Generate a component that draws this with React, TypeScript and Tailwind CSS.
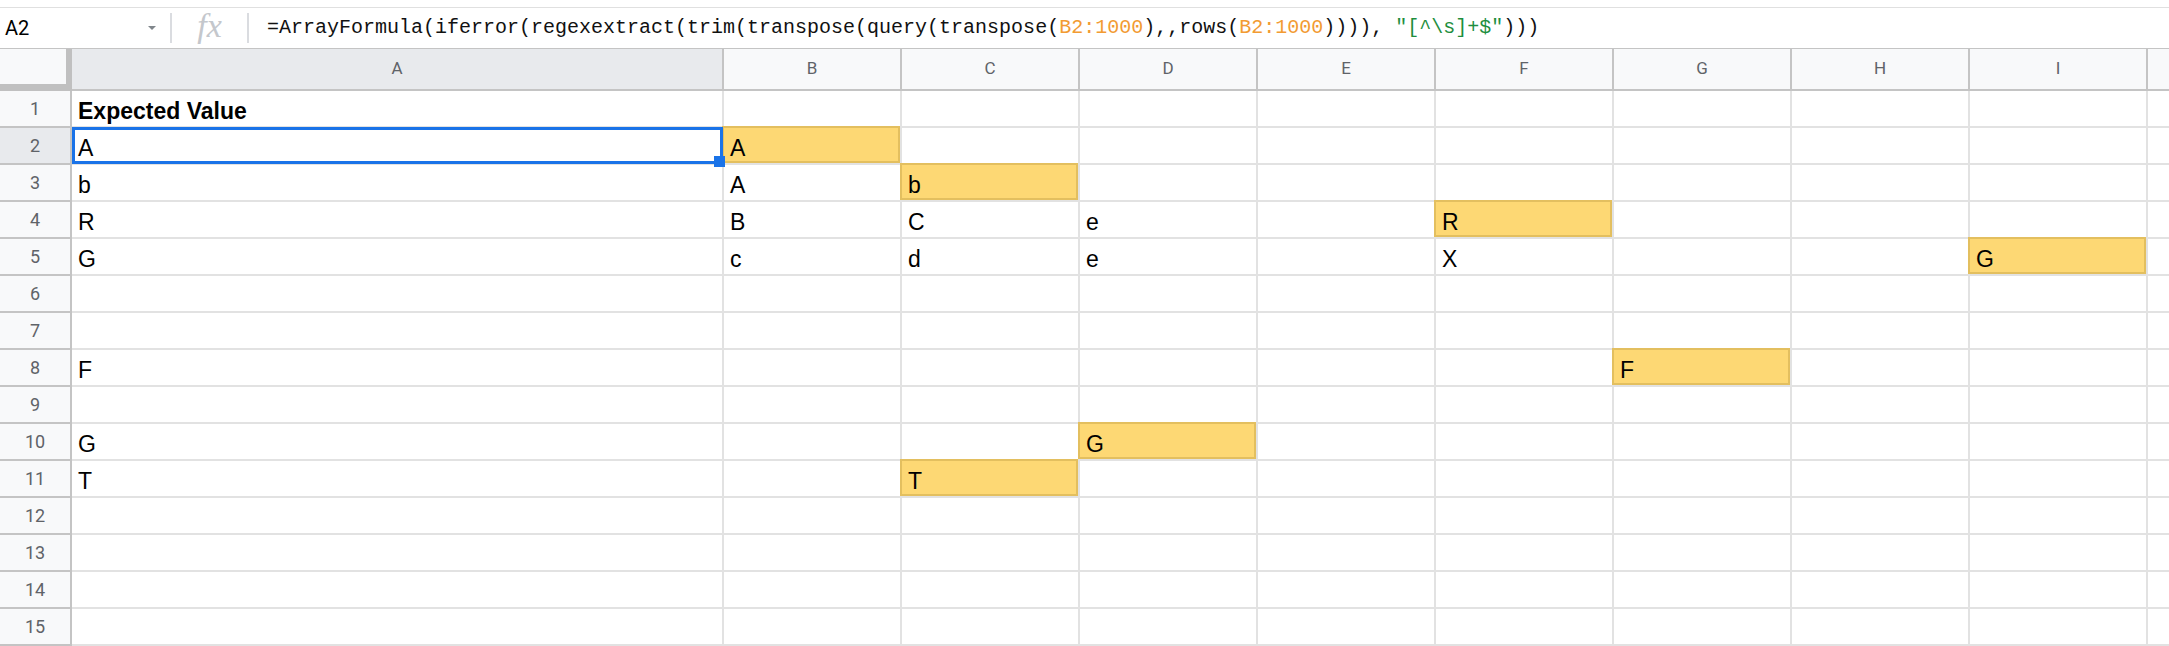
import React from "react";

type Cell = { v: string; hl?: boolean; bold?: boolean };

const COLS = ["A", "B", "C", "D", "E", "F", "G", "H", "I"];

// sheet contents, keyed by row then column
const DATA: Record<number, Record<string, Cell>> = {
  1: { A: { v: "Expected Value", bold: true } },
  2: { A: { v: "A" }, B: { v: "A", hl: true } },
  3: { A: { v: "b" }, B: { v: "A" }, C: { v: "b", hl: true } },
  4: { A: { v: "R" }, B: { v: "B" }, C: { v: "C" }, D: { v: "e" }, F: { v: "R", hl: true } },
  5: { A: { v: "G" }, B: { v: "c" }, C: { v: "d" }, D: { v: "e" }, F: { v: "X" }, I: { v: "G", hl: true } },
  8: { A: { v: "F" }, G: { v: "F", hl: true } },
  10: { A: { v: "G" }, D: { v: "G", hl: true } },
  11: { A: { v: "T" }, C: { v: "T", hl: true } },
};

const ROWS = Array.from({ length: 15 }, (_, i) => i + 1);

function FormulaBar() {
  return (
    <div className="flex items-center h-[41px] mt-[7px] border-t border-[#e0e0e0] bg-white">
      <div className="w-[170px] shrink-0 flex items-center justify-between pl-[5px] pr-[14px]">
        <span className="text-[20px] leading-none text-[#000]" style={{ fontFamily: "Roboto, sans-serif" }}>
          A2
        </span>
        <span className="w-0 h-0 border-l-[4px] border-r-[4px] border-t-[4px] border-l-transparent border-r-transparent border-t-[#80868b]" />
      </div>
      <div className="w-[2px] h-[30px] bg-[#dadce0]" />
      <div
        className="w-[75px] shrink-0 flex items-center justify-center text-[34px] leading-none italic text-[#c4c7cc] -mt-[4px]"
        style={{ fontFamily: "'Liberation Serif', serif" }}
      >
        fx
      </div>
      <div className="w-[2px] h-[30px] bg-[#dadce0]" />
      <div
        className="pl-[18px] text-[20px] leading-none text-[#111] whitespace-pre"
        style={{ fontFamily: "'Liberation Mono', monospace" }}
      >
        =ArrayFormula(iferror(regexextract(trim(transpose(query(transpose(
        <span className="text-[#f29b32]">B2:1000</span>),,rows(
        <span className="text-[#f29b32]">B2:1000</span>)))),{" "}
        <span className="text-[#1e8e3e]">{'"[^\\s]+$"'}</span>)))
      </div>
    </div>
  );
}

function HeaderRow() {
  return (
    <div className="flex h-[43px] border-t border-[#c4c4c4]" style={{ fontFamily: "Roboto, sans-serif" }}>
      <div className="w-[72px] shrink-0 bg-[#f8f9fa] border-r-[6px] border-b-[7px] border-[#c0c0c0]" />
      {COLS.map((c) => (
        <div
          key={c}
          className={`${c === "A" ? "w-[652px] bg-[#e8eaed]" : "w-[178px] bg-[#f8f9fa]"} shrink-0 flex items-center justify-center border-r-2 border-b-2 border-[#c4c4c4] text-[17px] text-[#5f6368]`}
        >
          {c}
        </div>
      ))}
      <div className="flex-1 bg-[#f8f9fa] border-b-2 border-[#c4c4c4]" />
    </div>
  );
}

function SheetCell({ row, col }: { row: number; col: string }) {
  const cell = DATA[row]?.[col];
  const selected = row === 2 && col === "A";
  return (
    <div
      className={`${col === "A" ? "w-[652px]" : "w-[178px]"} shrink-0 relative flex items-end pl-[6px] pb-[3px] border-r-2 border-b-2 border-[#e2e2e2] ${
        cell?.hl ? "bg-[#fdd874]" : ""
      }`}
    >
      {cell?.hl && (
        <div className="absolute -top-[2px] -left-[2px] right-0 bottom-0 border-2 border-[#e3bf5f] pointer-events-none" />
      )}
      {cell && (
        <span className={`relative text-[23px] leading-none text-black ${cell.bold ? "font-bold" : ""}`}>
          {cell.v}
        </span>
      )}
      {selected && (
        <div className="absolute -top-[1px] left-0 -right-[1px] -bottom-[1px] border-[3px] border-[#1a73e8] z-10">
          <div className="absolute -right-[5px] -bottom-[6px] w-[11px] h-[11px] bg-[#1a73e8]" />
        </div>
      )}
    </div>
  );
}

export default function App() {
  return (
    <div
      className="w-[2169px] h-[646px] overflow-hidden bg-white select-none"
      style={{ fontFamily: "'Liberation Sans', Arial, sans-serif" }}
    >
      <FormulaBar />
      <HeaderRow />
      {ROWS.map((r) => (
        <div key={r} className="flex h-[37px]">
          <div
            className={`w-[72px] shrink-0 flex items-center justify-center border-r-2 border-b-2 border-[#c4c4c4] text-[18px] text-[#5f6368] ${
              r === 2 ? "bg-[#e8eaed]" : "bg-[#f8f9fa]"
            }`}
            style={{ fontFamily: "Roboto, sans-serif" }}
          >
            {r}
          </div>
          {COLS.map((c) => (
            <SheetCell key={c} row={r} col={c} />
          ))}
          <div className="flex-1 border-b-2 border-[#e2e2e2]" />
        </div>
      ))}
    </div>
  );
}
